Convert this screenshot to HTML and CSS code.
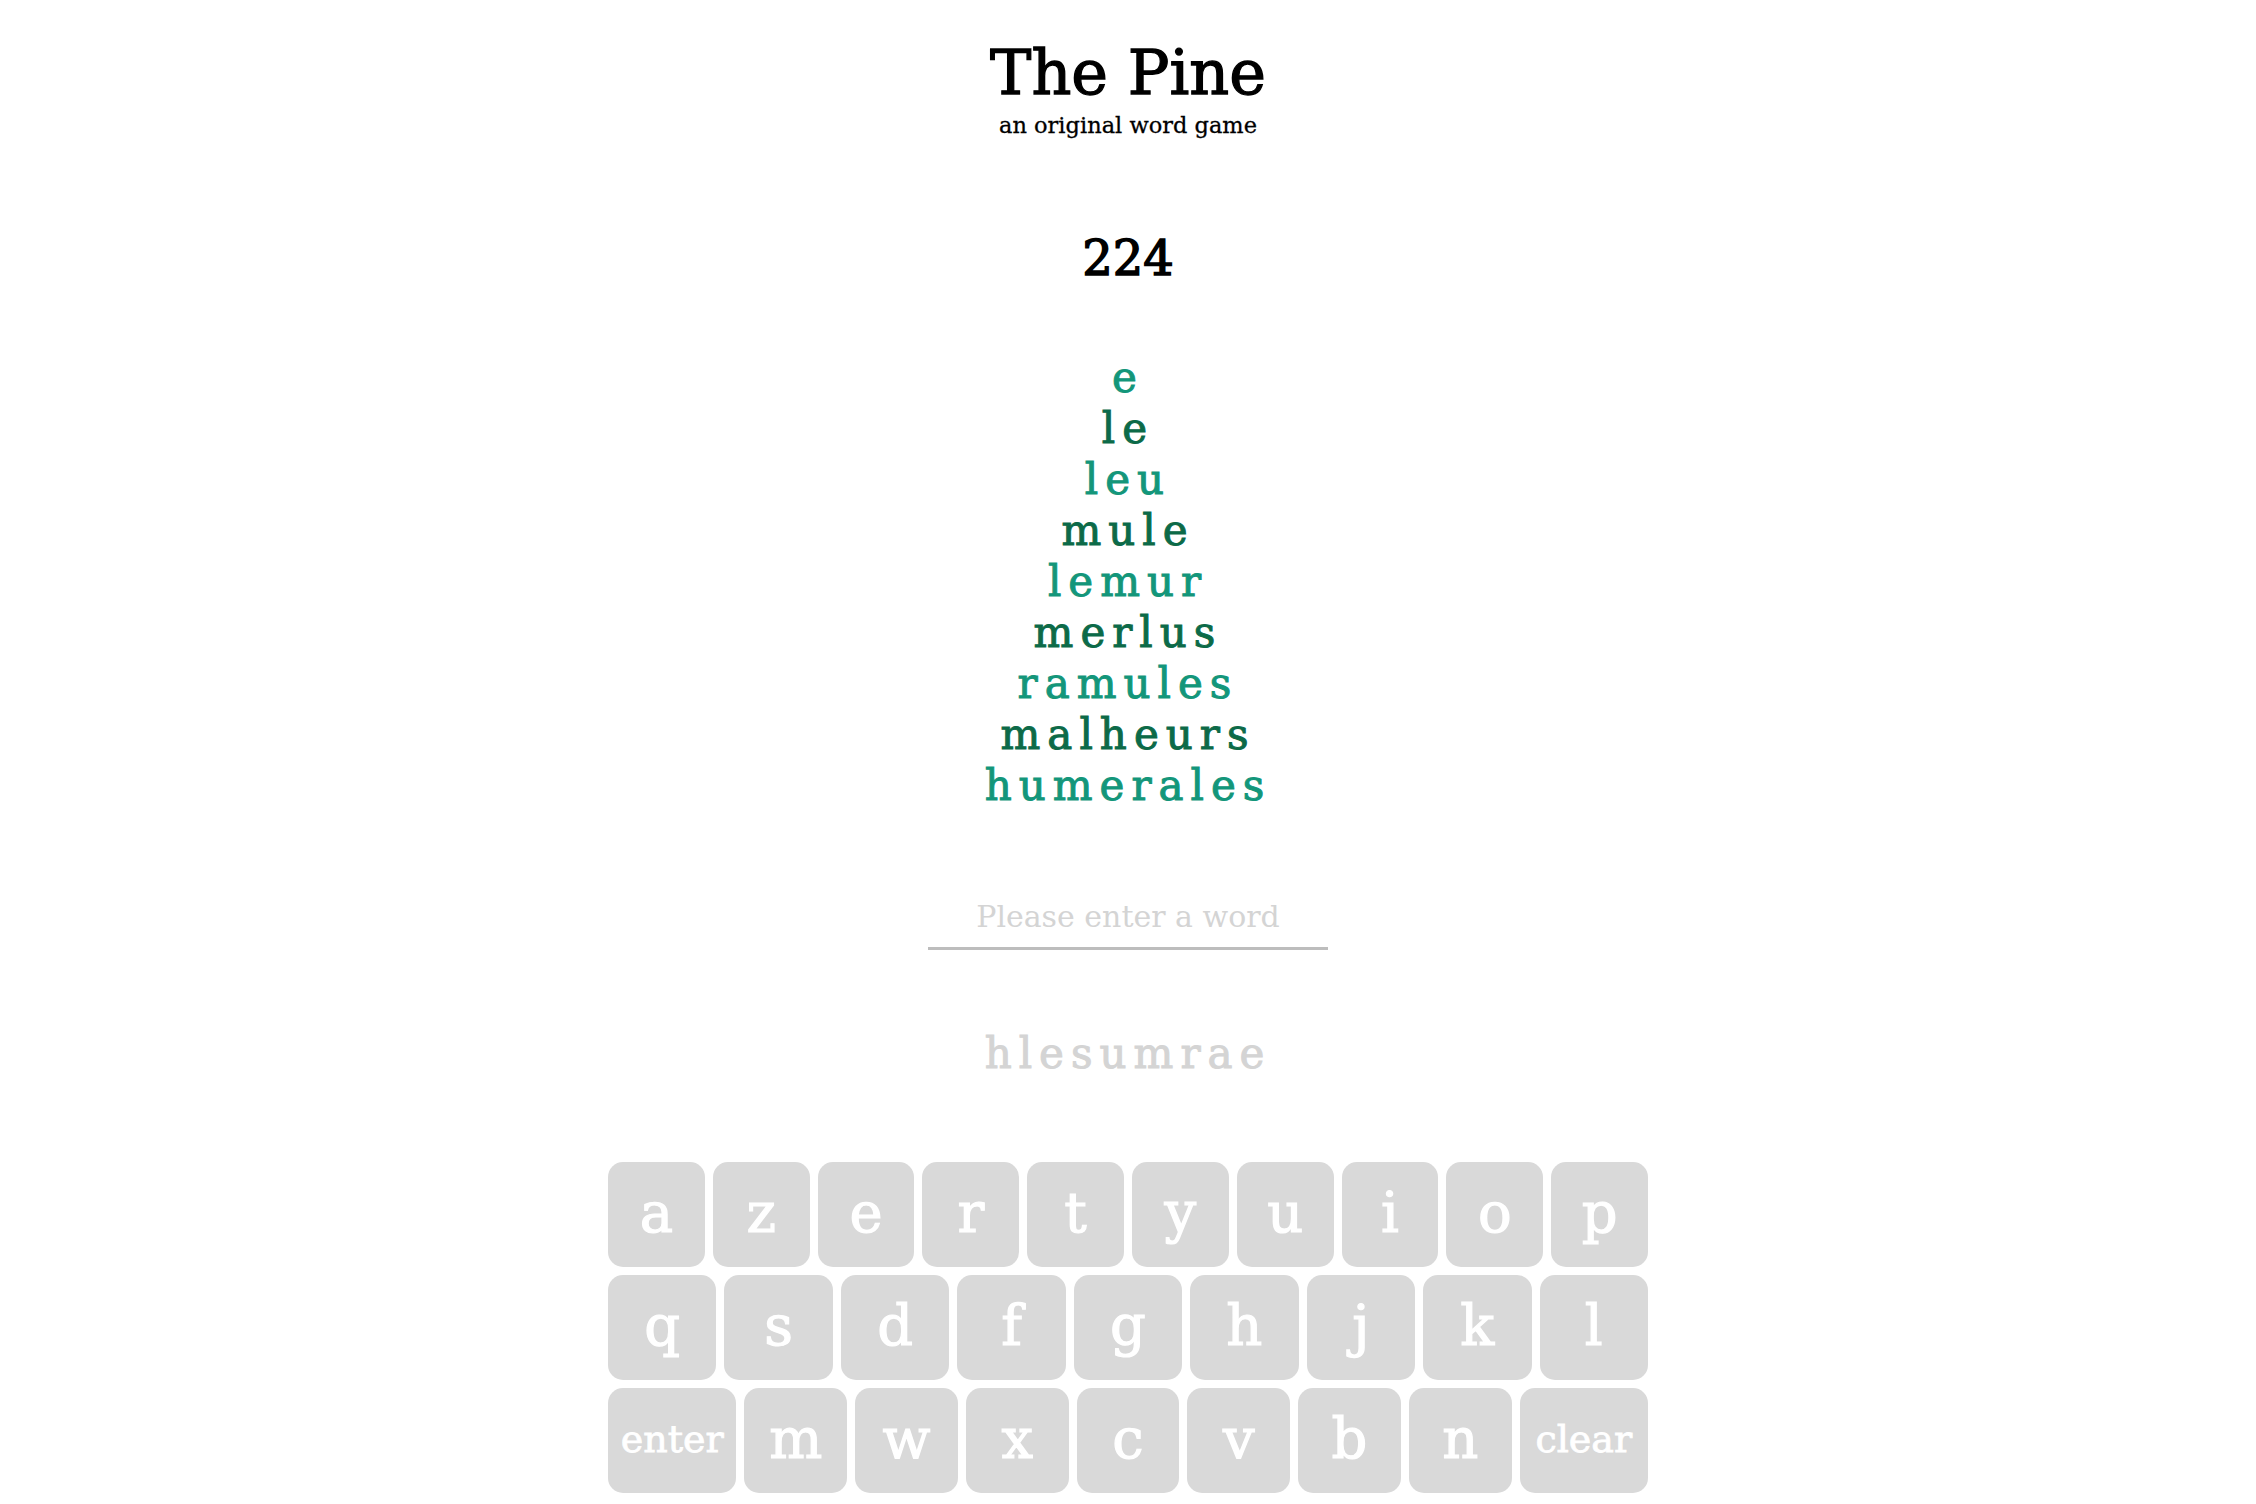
FILE: index.html
```html
<!DOCTYPE html>
<html lang="en">
<head>
<meta charset="utf-8">
<title>The Pine</title>
<link rel="stylesheet" href="styles.css">
</head>
<body>
<main class="app">
  <header class="header">
    <h1 class="title">The Pine</h1>
    <p class="subtitle">an original word game</p>
  </header>
  <div class="score">224</div>
  <ol class="pine">
    <li class="word light">e</li>
    <li class="word dark">le</li>
    <li class="word light">leu</li>
    <li class="word dark">mule</li>
    <li class="word light">lemur</li>
    <li class="word dark">merlus</li>
    <li class="word light">ramules</li>
    <li class="word dark">malheurs</li>
    <li class="word light">humerales</li>
  </ol>
  <input class="entry" type="text" placeholder="Please enter a word">
  <div class="letters">hlesumrae</div>
  <div class="keyboard">
    <div class="row">
      <button class="key">a</button><button class="key">z</button><button class="key">e</button><button class="key">r</button><button class="key">t</button><button class="key">y</button><button class="key">u</button><button class="key">i</button><button class="key">o</button><button class="key">p</button>
    </div>
    <div class="row">
      <button class="key">q</button><button class="key">s</button><button class="key">d</button><button class="key">f</button><button class="key">g</button><button class="key">h</button><button class="key">j</button><button class="key">k</button><button class="key">l</button>
    </div>
    <div class="row">
      <button class="key key-wide">enter</button><button class="key">m</button><button class="key">w</button><button class="key">x</button><button class="key">c</button><button class="key">v</button><button class="key">b</button><button class="key">n</button><button class="key key-wide">clear</button>
    </div>
  </div>
</main>
</body>
</html>
```

FILE: styles.css
```css
* { box-sizing: border-box; }

html, body {
  margin: 0;
  padding: 0;
  background: #ffffff;
}

body {
  font-family: "DejaVu Serif", "Liberation Serif", serif;
  color: #000;
}

.app {
  display: flex;
  flex-direction: column;
  align-items: center;
  width: 100%;
}

.header {
  display: flex;
  flex-direction: column;
  align-items: center;
  margin-top: 38px;
}

.title {
  margin: 0;
  font-size: 62px;
  line-height: 70px;
  font-weight: normal;
  -webkit-text-stroke: 1.3px #000;
}

.subtitle {
  margin: 3px 0 0;
  font-size: 22.5px;
  line-height: 28px;
  -webkit-text-stroke: 0.3px #000;
}

.score {
  margin-top: 91px;
  font-size: 48px;
  line-height: 56px;
  -webkit-text-stroke: 1.5px #000;
}

.pine {
  list-style: none;
  margin: 66px 0 0;
  padding: 0;
  display: flex;
  flex-direction: column;
  align-items: center;
}

.word {
  font-size: 42px;
  line-height: 51px;
  letter-spacing: 7px;
  -webkit-text-stroke: 1px currentColor;
}

.light { color: #13967a; }
.dark { color: #0c6a48; }

.entry {
  margin-top: 79px;
  width: 400px;
  height: 60px;
  padding: 0 0 5px;
  border: none;
  border-bottom: 3px solid #bdbdbd;
  outline: none;
  background: transparent;
  font-family: "DejaVu Serif", serif;
  font-size: 30px;
  text-align: center;
  color: #333;
}

.entry::placeholder {
  color: #d4d4d4;
}

.letters {
  margin-top: 78px;
  font-size: 42px;
  line-height: 51px;
  letter-spacing: 7px;
  color: #d4d4d4;
  -webkit-text-stroke: 1px #d4d4d4;
}

.keyboard {
  margin-top: 83px;
  width: 1040px;
  display: flex;
  flex-direction: column;
  gap: 8px;
}

.row {
  display: flex;
  gap: 8px;
}

.key {
  flex: 1 1 0;
  height: 105px;
  border: none;
  border-radius: 15px;
  background: #d9d9d9;
  color: #ffffff;
  font-family: "DejaVu Serif", serif;
  font-size: 56px;
  padding: 0 0 4px;
  display: flex;
  align-items: center;
  justify-content: center;
  -webkit-text-stroke: 1.2px #ffffff;
}

.key-wide {
  flex-grow: 1.25;
  font-size: 38px;
  -webkit-text-stroke: 0.8px #ffffff;
}
```
